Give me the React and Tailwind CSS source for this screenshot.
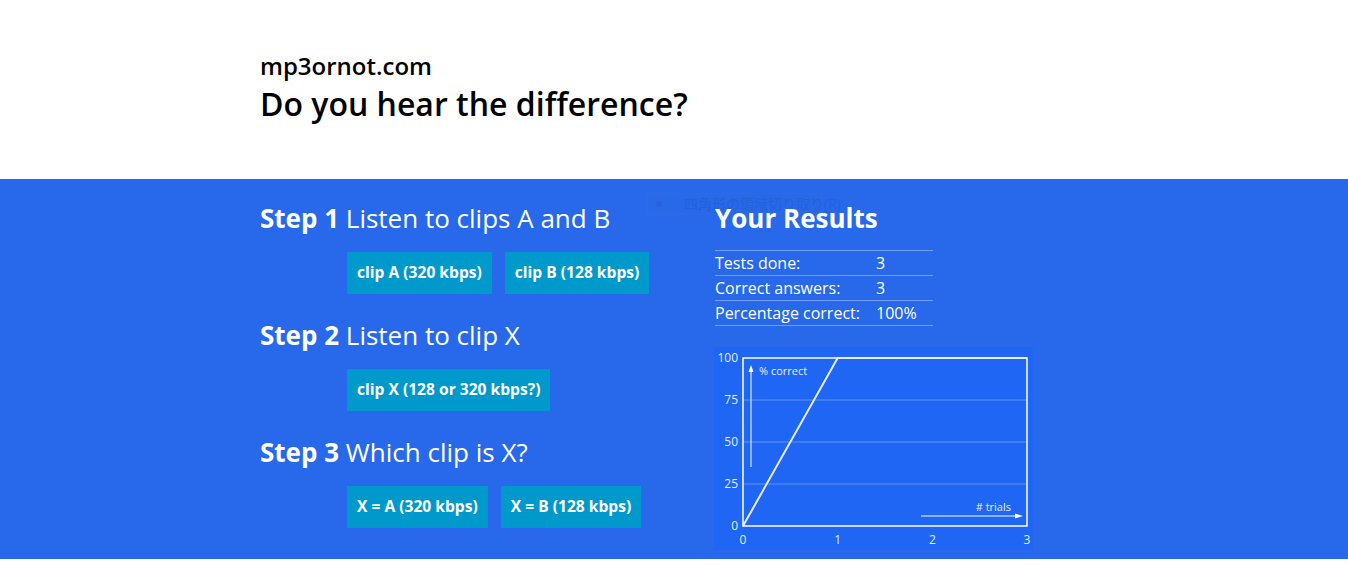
import React from "react";

const font = { fontFamily: '"Open Sans", "Noto Sans CJK JP", sans-serif' };

function Btn({ children }) {
  return (
    <button className="h-[42px] px-[10px] bg-[#0099cc] text-white text-[15.6px] font-bold leading-none whitespace-nowrap">
      {children}
    </button>
  );
}

function Step({ n, text }) {
  return (
    <h2 className="text-[26px] leading-[36px] text-white">
      <span className="font-bold">Step {n}</span> {text}
    </h2>
  );
}

function Chart() {
  const x0 = 29, x1 = 313, y0 = 179, y1 = 11;
  const xs = [0, 1, 2, 3].map((i) => x0 + ((x1 - x0) * i) / 3);
  const ys = [0, 25, 50, 75, 100].map((v) => y0 - ((y0 - y1) * v) / 100);
  return (
    <svg width="319" height="203" viewBox="0 0 319 203" className="block">
      <rect x="0" y="0" width="319" height="203" fill="#1f66f4" />
      {ys.slice(1, 4).map((y, i) => (
        <line key={i} x1={x0} x2={x1} y1={y} y2={y} stroke="rgba(255,255,255,0.3)" strokeWidth="1" />
      ))}
      <rect x={x0} y={y1} width={x1 - x0} height={y0 - y1} fill="none" stroke="#ffffff" strokeWidth="1.5" />
      <polyline points={`${x0},${y0} ${xs[1]},${y1} ${x1},${y1}`} fill="none" stroke="#e8ecf5" strokeWidth="2" />
      {[0, 25, 50, 75, 100].map((v, i) => (
        <text key={v} x={x0 - 5} y={ys[i] + 4} textAnchor="end" fill="#e6ecfa" fontSize="12" style={font}>
          {v}
        </text>
      ))}
      {xs.map((x, i) => (
        <text key={i} x={x} y={197} textAnchor="middle" fill="#e6ecfa" fontSize="12" style={font}>
          {i}
        </text>
      ))}
      <line x1="37" y1="120" x2="37" y2="24" stroke="#ffffff" strokeWidth="1" />
      <polygon points="37,18 34.5,25 39.5,25" fill="#ffffff" />
      <text x="45" y="28" fill="#e6ecfa" fontSize="11" style={font}>% correct</text>
      <line x1="207" y1="169" x2="302" y2="169" stroke="#ffffff" strokeWidth="1" />
      <polygon points="309,169 301,166.5 301,171.5" fill="#ffffff" />
      <text x="297" y="164" textAnchor="end" fill="#e6ecfa" fontSize="11" style={font}>
        # trials
      </text>
    </svg>
  );
}

export default function App() {
  return (
    <div className="w-[1348px] h-[571px] bg-white overflow-hidden" style={font}>
      <div className="h-[179px] pl-[260px] pt-[50px]">
        <div className="text-[24px] leading-[32px] font-semibold text-black">mp3ornot.com</div>
        <h1 className="text-[32px] leading-[42px] font-semibold text-black mt-[1px]">
          Do you hear the difference?
        </h1>
      </div>
      <div className="relative h-[380px] bg-[#2769ea] pl-[260px] pt-[21px] flex">
        <div className="absolute left-[647px] top-[14px] w-[175px] h-[22px] bg-[#2a6ae4] border border-[#3470e0] flex items-center gap-[22px] pl-[8px] opacity-40">
          <span className="w-[6px] h-[6px] rounded-full bg-[#2458c8] shrink-0" />
          <span className="text-[14px] leading-none text-[#2156c4] whitespace-nowrap">四角形の領域切り取り(R)</span>
        </div>
        <div className="w-[455px]">
          <Step n="1" text="Listen to clips A and B" />
          <div className="flex gap-[13px] pl-[87px] mt-[16px]">
            <Btn>clip A (320 kbps)</Btn>
            <Btn>clip B (128 kbps)</Btn>
          </div>
          <div className="mt-[23px]">
            <Step n="2" text="Listen to clip X" />
          </div>
          <div className="flex pl-[87px] mt-[16px]">
            <Btn>clip X (128 or 320 kbps?)</Btn>
          </div>
          <div className="mt-[23px]">
            <Step n="3" text="Which clip is X?" />
          </div>
          <div className="flex gap-[13px] pl-[87px] mt-[16px]">
            <Btn>X = A (320 kbps)</Btn>
            <Btn>X = B (128 kbps)</Btn>
          </div>
        </div>
        <div className="relative z-10">
          <h2 className="text-[26px] leading-[36px] text-white font-bold">Your Results</h2>
          <div className="mt-[14px] w-[218px] border-t border-[rgba(255,255,255,0.35)] text-white text-[16px]">
            {[
              ["Tests done:", "3"],
              ["Correct answers:", "3"],
              ["Percentage correct:", "100%"],
            ].map(([a, b]) => (
              <div key={a} className="flex h-[25px] items-center border-b border-[rgba(255,255,255,0.35)]">
                <span className="w-[161px]">{a}</span>
                <span>{b}</span>
              </div>
            ))}
          </div>
          <div className="mt-[21px] -ml-[1px]">
            <Chart />
          </div>
        </div>
      </div>
    </div>
  );
}
